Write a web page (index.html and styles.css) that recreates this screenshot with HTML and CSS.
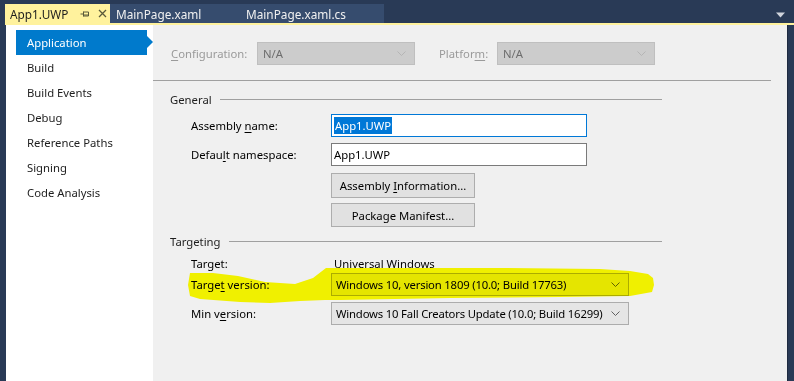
FILE: index.html
```html
<!DOCTYPE html>
<html>
<head>
<meta charset="utf-8">
<link rel="stylesheet" href="styles.css">
</head>
<body>
<div class="window">
  <div class="tabbar">
    <div class="tab tab-active">
      <span class="tab-title">App1.UWP</span>
      <svg class="tab-pin" width="10" height="8" viewBox="0 0 10 8"><path d="M0.5 4H3.5M3.5 1.5V6.5M3.5 2H8.5V6H3.5M3.5 5H8.5" fill="none" stroke="#5a5a3a" stroke-width="1"/></svg>
      <svg class="tab-close" width="9" height="9" viewBox="0 0 9 9"><path d="M1 1L8 8M8 1L1 8" stroke="#5a5a3a" stroke-width="1.3"/></svg>
    </div>
    <div class="tab tab-2">MainPage.xaml</div>
    <div class="tab tab-3">MainPage.xaml.cs</div>
    <div class="tab-spacer"></div>
    <svg class="tab-menu" width="9" height="6" viewBox="0 0 9 6"><path d="M0 0.5H9L4.5 5.5Z" fill="#d0d4dc"/></svg>
  </div>
  <div class="body">
    <nav class="sidebar">
      <div class="nav-item selected">Application</div>
      <div class="nav-item">Build</div>
      <div class="nav-item">Build Events</div>
      <div class="nav-item">Debug</div>
      <div class="nav-item">Reference Paths</div>
      <div class="nav-item">Signing</div>
      <div class="nav-item">Code Analysis</div>
    </nav>
    <main class="content">
      <div class="config-row">
        <span class="label-disabled cfg-label"><u>C</u>onfiguration:</span>
        <div class="combo combo-disabled cfg-combo"><span>N/A</span><svg class="chev" width="9" height="5" viewBox="0 0 9 5"><path d="M0.5 0.5L4.5 4.5L8.5 0.5" fill="none" stroke="#b5b5b5"/></svg></div>
        <span class="label-disabled plat-label">Platfor<u>m</u>:</span>
        <div class="combo combo-disabled cfg-combo"><span>N/A</span><svg class="chev" width="9" height="5" viewBox="0 0 9 5"><path d="M0.5 0.5L4.5 4.5L8.5 0.5" fill="none" stroke="#b5b5b5"/></svg></div>
      </div>
      <div class="rule"></div>

      <div class="section-head head-general"><span>General</span><div class="head-line"></div></div>
      <div class="row row-first">
        <span class="label">Assembly <u>n</u>ame:</span>
        <div class="textbox focused"><span class="sel">App1.UWP</span></div>
      </div>
      <div class="row">
        <span class="label">Defau<u>l</u>t namespace:</span>
        <div class="textbox">App1.UWP</div>
      </div>
      <div class="row row-btn1">
        <span class="label"></span>
        <div class="button btn1"><span>Assembly <u>I</u>nformation...</span></div>
      </div>
      <div class="row row-btn2">
        <span class="label"></span>
        <div class="button btn2"><span>Package Manifest...</span></div>
      </div>

      <div class="section-head head-target"><span>Targeting</span><div class="head-line"></div></div>
      <div class="row row-text">
        <span class="label">Target:</span>
        <span class="value">Universal Windows</span>
      </div>
      <div class="row row-tv">
        <span class="label">Targe<u>t</u> version:</span>
        <div class="combo combo-enabled"><span>Windows 10, version 1809 (10.0; Build 17763)</span><svg class="chev" width="9" height="5" viewBox="0 0 9 5"><path d="M0.5 0.5L4.5 4.5L8.5 0.5" fill="none" stroke="#606060"/></svg></div>
      </div>
      <div class="row row-mv">
        <span class="label">Min v<u>e</u>rsion:</span>
        <div class="combo combo-enabled"><span>Windows 10 Fall Creators Update (10.0; Build 16299)</span><svg class="chev" width="9" height="5" viewBox="0 0 9 5"><path d="M0.5 0.5L4.5 4.5L8.5 0.5" fill="none" stroke="#606060"/></svg></div>
      </div>

      <svg class="highlight" width="634" height="356" viewBox="0 0 634 356">
        <path d="M37 248 L60 248 L85 251 L112 257 L142 259 L160 253 L173 243 L247 243 L347 243 L447 244 L477 246 L495 249 L500 253 L501 260 L499 267 L477 271 L407 272 L297 273 L187 275 L172 275 L147 276 L117 278 L87 277 L47 274 L37 271 L35 260 Z" fill="#ffff00"/>
      </svg>
    </main>
    <div class="right-edge"></div>
  </div>
</div>
</body>
</html>
```

FILE: styles.css
```css
html, body {
  margin: 0;
  padding: 0;
}
body {
  background: #293a56;
  font-family: "Segoe UI", "Noto Sans", sans-serif;
  font-size: 11.3px;
  color: #1e1e1e;
  width: 794px;
  height: 381px;
  overflow: hidden;
}
.window {
  display: flex;
  flex-direction: column;
  height: 381px;
}
.tabbar {
  height: 23px;
  display: flex;
  align-items: flex-end;
  padding-left: 5px;
  padding-right: 7px;
  font-size: 11.8px;
}
.tab {
  height: 19px;
  display: flex;
  align-items: center;
  box-sizing: border-box;
  color: #f1f1f1;
  white-space: nowrap;
}
.tab-active {
  width: 105px;
  background: #fff29d;
  color: #1e1e1e;
  padding-left: 5px;
}
.tab-title {
  width: 64px;
}
.tab-pin {
  margin-left: 6px;
}
.tab-close {
  margin-left: 8px;
}
.tab-2 {
  width: 124px;
  background: #364c6e;
  padding-left: 6px;
}
.tab-3 {
  width: 150px;
  background: #364c6e;
  padding-left: 12px;
}
.tab-spacer {
  flex: 1;
}
.tab-menu {
  align-self: center;
  margin-top: 6px;
  margin-right: 2px;
}
.body {
  flex: 1;
  display: flex;
  margin-left: 5px;
  border-top: 2px solid #fff29d;
}
.sidebar {
  width: 147px;
  margin-left: 1px;
  background: #ffffff;
  padding-top: 5px;
  box-sizing: border-box;
}
.nav-item {
  height: 25px;
  line-height: 25px;
  margin-left: 10px;
  margin-right: 6px;
  padding-left: 11px;
  position: relative;
}
.nav-item.selected {
  background: #007acc;
  color: #ffffff;
}
.nav-item.selected::after {
  content: "";
  position: absolute;
  right: -6px;
  top: 6px;
  border-left: 6px solid #007acc;
  border-top: 6.5px solid transparent;
  border-bottom: 6.5px solid transparent;
}
.content {
  width: 634px;
  background: #f0f0f0;
  position: relative;
  padding-top: 17px;
  box-sizing: border-box;
}
.right-edge {
  flex: 1;
  background: #293a56;
  border-left: 1px solid #1e2a40;
}
.config-row {
  display: flex;
  align-items: center;
  height: 23px;
  padding-left: 18px;
}
.label-disabled {
  color: #9a9a9a;
}
.cfg-label {
  width: 86px;
}
.plat-label {
  margin-left: 24px;
  width: 58px;
}
.combo {
  height: 23px;
  box-sizing: border-box;
  display: flex;
  align-items: center;
  justify-content: space-between;
  padding-left: 5px;
  padding-right: 8px;
  white-space: nowrap;
}
.combo-disabled {
  background: #cccccc;
  border: 1px solid #bfbfbf;
  color: #6d6d6d;
}
.cfg-combo {
  width: 158px;
}
.combo-enabled {
  width: 298px;
  background: #e5e5e5;
  border: 1px solid #acacac;
  color: #000000;
  padding-left: 4px;
  letter-spacing: -0.18px;
}
.rule {
  height: 1px;
  background: #a0a0a0;
  margin-top: 15px;
  margin-right: 16px;
}
.section-head {
  display: flex;
  align-items: center;
  height: 16px;
  padding-left: 17px;
}
.head-general {
  margin-top: 10px;
}
.head-target {
  margin-top: 6px;
}
.head-line {
  flex: 1;
  height: 1px;
  background: #a0a0a0;
  margin-left: 8px;
  margin-right: 125px;
}
.row {
  display: flex;
  align-items: center;
  padding-left: 38px;
  margin-top: 6px;
}
.row-first {
  margin-top: 7px;
}
.label {
  width: 140px;
  flex-shrink: 0;
  color: #000000;
}
.textbox {
  width: 256px;
  height: 23px;
  box-sizing: border-box;
  background: #ffffff;
  border: 1px solid #7a7a7a;
  display: flex;
  align-items: center;
  padding-left: 2px;
  color: #000000;
}
.textbox.focused {
  border-color: #0078d7;
}
.sel {
  background: #0078d7;
  color: #ffffff;
  padding: 1px 1px;
}
.button {
  width: 144px;
  box-sizing: border-box;
  background: #e1e1e1;
  border: 1px solid #adadad;
  display: flex;
  align-items: center;
  justify-content: center;
  color: #000000;
}
.row-btn1 {
  margin-top: 7px;
}
.btn1 {
  height: 25px;
}
.row-btn2 {
  margin-top: 5px;
}
.btn2 {
  height: 24px;
}
.row-text {
  margin-top: 4px;
  height: 20px;
}
.value {
  margin-left: 3px;
  color: #000000;
}
.row-tv {
  margin-top: 0;
}
.row-mv {
  margin-top: 6px;
}
.chev {
  flex-shrink: 0;
}
.highlight {
  position: absolute;
  left: 0;
  top: 0;
  pointer-events: none;
  mix-blend-mode: multiply;
}
u {
  text-decoration-thickness: 1px;
  text-underline-offset: 2px;
}
```
